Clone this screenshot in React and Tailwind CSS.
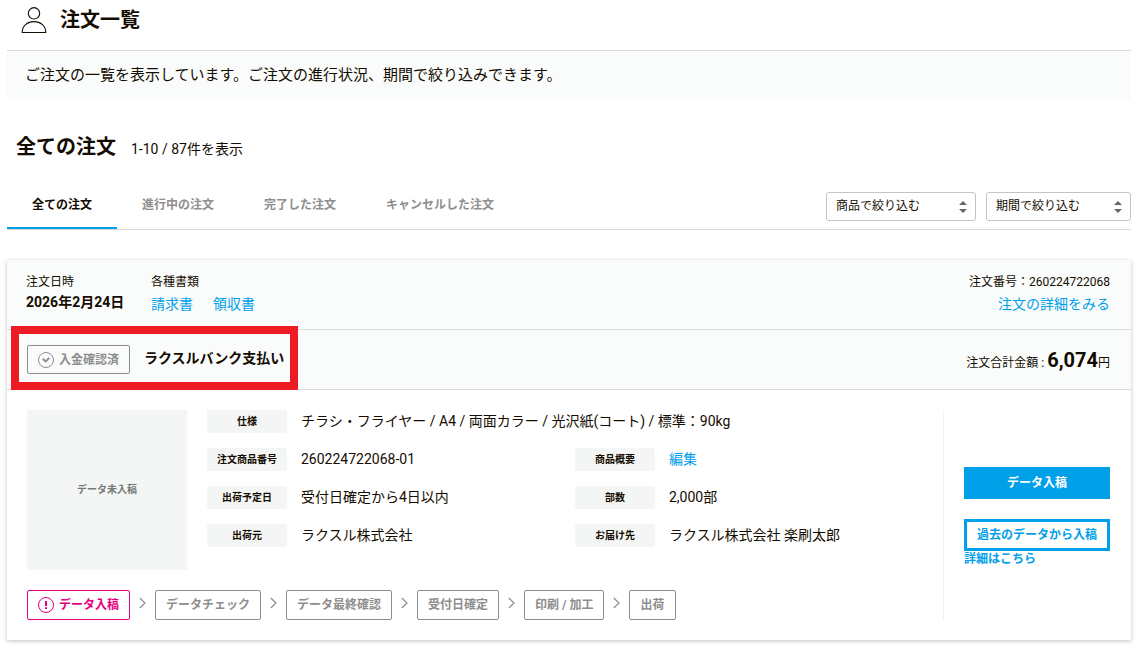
import { clsx } from 'clsx'

const tabs = ['全ての注文', '進行中の注文', '完了した注文', 'キャンセルした注文']

const filters = [
  { id: 'product', label: '商品で絞り込む', width: 'w-[150px]' },
  { id: 'period', label: '期間で絞り込む', width: 'w-[145px]' },
]

const details = [
  { label: '仕様', value: 'チラシ・フライヤー / A4 / 両面カラー / 光沢紙(コート) / 標準：90kg', wide: true },
  { label: '注文商品番号', value: '260224722068-01' },
  { label: '商品概要', value: '編集', link: true },
  { label: '出荷予定日', value: '受付日確定から4日以内' },
  { label: '部数', value: '2,000部' },
  { label: '出荷元', value: 'ラクスル株式会社' },
  { label: 'お届け先', value: 'ラクスル株式会社 楽刷太郎' },
]

const steps = ['データ入稿', 'データチェック', 'データ最終確認', '受付日確定', '印刷 / 加工', '出荷']

function UserIcon() {
  return (
    <svg className="h-[27px] w-[26px]" viewBox="0 0 26 27" fill="none" stroke="currentColor" strokeWidth="1.1" aria-hidden="true">
      <circle cx="13" cy="6.3" r="5.7" />
      <path d="M1.2 25.5C1.2 19.2 6.2 14.6 13 14.6S24.8 19.2 24.8 25.5Z" strokeLinejoin="round" />
    </svg>
  )
}

function CheckIcon() {
  return (
    <svg className="size-4" viewBox="0 0 16 16" fill="none" stroke="currentColor" aria-hidden="true">
      <circle cx="8" cy="8" r="7.5" />
      <path d="M4.8 6.8 7.6 9.4 11.2 6" strokeWidth="2" />
    </svg>
  )
}

function AlertIcon() {
  return (
    <svg className="size-4" viewBox="0 0 16 16" fill="none" stroke="currentColor" aria-hidden="true">
      <circle cx="8" cy="8" r="7.5" />
      <path d="M8 4V9M8 10.2V12" strokeWidth="2" />
    </svg>
  )
}

function Chevron() {
  return (
    <svg className="mb-1 h-3 w-[7px]" viewBox="0 0 7 12" fill="none" stroke="#8e8e8e" strokeWidth="1.2" aria-hidden="true">
      <path d="M.8 1 6 6 .8 11" />
    </svg>
  )
}

function FilterSelect({ id, label, width }) {
  return (
    <div className={clsx('relative', width)}>
      <select
        id={id}
        aria-label={label}
        className="h-[29px] w-full appearance-none rounded-[3px] border border-[#c4c4c4] bg-white pr-7 pb-[2px] pl-[9px] text-xs"
      >
        <option>{label}</option>
      </select>
      <svg className="pointer-events-none absolute top-[9px] right-[9px] h-3 w-2" viewBox="0 0 8 12" fill="#666" aria-hidden="true">
        <path d="M4 0 8 4H0ZM4 12 0 8H8Z" />
      </svg>
    </div>
  )
}

function DetailRow({ label, value, wide, link }) {
  return (
    <div className={clsx('flex h-[23px] items-center', wide && 'col-span-2')}>
      <dt className="h-[23px] w-20 shrink-0 rounded-[2px] bg-[#f4f6f5] text-center text-[10px] leading-[23px] font-bold">{label}</dt>
      <dd className="pl-[14px] text-sm leading-[23px]">
        {link ? <a href="#" className="text-[#00a0e9]">{value}</a> : value}
      </dd>
    </div>
  )
}

function OrderCard() {
  return (
    <article className="mt-[30px] bg-white shadow-[0_1px_4px_rgba(0,0,0,0.25)]">
      <div className="flex h-[70px] justify-between border-b border-[#d9dcdb] bg-[#fafcfb] pt-[13px] pr-[21px] pl-[19px]">
        <div className="flex">
          <div className="w-[125px]">
            <p className="text-xs leading-[19px]">注文日時</p>
            <p className="text-sm leading-5 font-bold">2026年2月24日</p>
          </div>
          <div>
            <p className="text-xs leading-[19px]">各種書類</p>
            <div className="flex gap-5 text-sm leading-[25px] text-[#00a0e9]">
              <a href="#">請求書</a>
              <a href="#">領収書</a>
            </div>
          </div>
        </div>
        <div className="text-right">
          <p className="text-xs leading-[19px]">注文番号：260224722068</p>
          <a href="#" className="block text-sm leading-[25px] text-[#00a0e9]">注文の詳細をみる</a>
        </div>
      </div>

      <div className="relative flex h-[60px] items-center justify-between border-b border-[#d9dcdb] bg-[#fafcfb] pr-[21px] pl-5">
        <div className="flex items-center gap-[14px]">
          <span className="flex h-[29px] items-center gap-[5px] rounded-[2px] border border-[#8e8e8e] px-[10px] text-xs font-bold text-[#8e8e8e]">
            <CheckIcon />
            入金確認済
          </span>
          <p className="pb-1 text-sm font-bold">ラクスルバンク支払い</p>
        </div>
        <p className="text-xs">
          注文合計金額 : <strong className="text-xl leading-7">6,074</strong>円
        </p>
        <div className="pointer-events-none absolute -top-1 left-1 h-16 w-[287px] border-8 border-[#ed1c24]" />
      </div>

      <div className="flex py-5 pr-[21px] pl-5">
        <div className="min-w-0 flex-1">
          <div className="flex gap-5">
            <div className="flex size-40 shrink-0 items-center justify-center bg-[#f4f6f5] pb-[2px] text-[10px] font-bold text-[#777]">
              データ未入稿
            </div>
            <dl className="grid flex-1 grid-cols-2 content-start gap-y-[15px]">
              {details.map((item) => (
                <DetailRow key={item.label} {...item} />
              ))}
            </dl>
          </div>
          <ol className="mt-5 flex">
            {steps.map((step, i) => (
              <li key={step} className="flex items-center">
                {i > 0 && (
                  <span className="flex w-[25px] justify-center">
                    <Chevron />
                  </span>
                )}
                <span
                  className={clsx(
                    'flex h-[30px] items-center gap-[5px] rounded-[2px] border px-[10px] text-xs font-bold whitespace-nowrap',
                    i === 0 ? 'border-[#e4007f] text-[#e4007f]' : 'border-[#8e8e8e] text-[#8e8e8e]'
                  )}
                >
                  {i === 0 && <AlertIcon />}
                  {step}
                </span>
              </li>
            ))}
          </ol>
        </div>
        <div className="flex w-[167px] shrink-0 flex-col justify-center border-l border-[#f1f3f2] pt-1 pl-5 text-xs font-bold">
          <button type="button" className="h-8 bg-[#00a0e9] text-white">データ入稿</button>
          <button type="button" className="mt-5 h-8 border-[3px] border-[#00a0e9] bg-white whitespace-nowrap text-[#00a0e9]">
            過去のデータから入稿
          </button>
          <a href="#" className="leading-4 text-[#00a0e9]">詳細はこちら</a>
        </div>
      </div>
    </article>
  )
}

export default function App() {
  return (
    <main className="bg-white pr-[9px] pb-[11px] pl-[7px] font-['Roboto','Noto_Sans_CJK_JP',sans-serif] text-[#140c00]">
      <header className="flex h-[51px] items-start gap-[13px] border-b border-[#d9dcdb] pt-[7px] pl-[14px]">
        <UserIcon />
        <h1 className="text-xl leading-[27px] font-bold">注文一覧</h1>
      </header>
      <p className="bg-[#fafcfb] px-[18px] text-[15px] leading-[49px]">
        ご注文の一覧を表示しています。ご注文の進行状況、期間で絞り込みできます。
      </p>

      <div className="mt-8 flex items-baseline gap-[15px] pl-[9px]">
        <h2 className="text-xl leading-[30px] font-bold">全ての注文</h2>
        <p className="text-sm">1-10 / 87件を表示</p>
      </div>

      <div className="mt-[18px] flex h-[50px] justify-between border-b border-[#d9dcdb]">
        <nav className="flex">
          {tabs.map((tab, i) => (
            <a
              key={tab}
              href="#"
              aria-current={i === 0 ? 'page' : undefined}
              className={clsx(
                'border-b-2 px-[25px] pt-[15px] text-xs leading-5 font-bold',
                i === 0 ? 'border-[#00a0e9]' : 'border-transparent text-[#8e8e8e]'
              )}
            >
              {tab}
            </a>
          ))}
        </nav>
        <div className="flex gap-[10px] pt-3">
          {filters.map((filter) => (
            <FilterSelect key={filter.id} {...filter} />
          ))}
        </div>
      </div>

      <OrderCard />
    </main>
  )
}
